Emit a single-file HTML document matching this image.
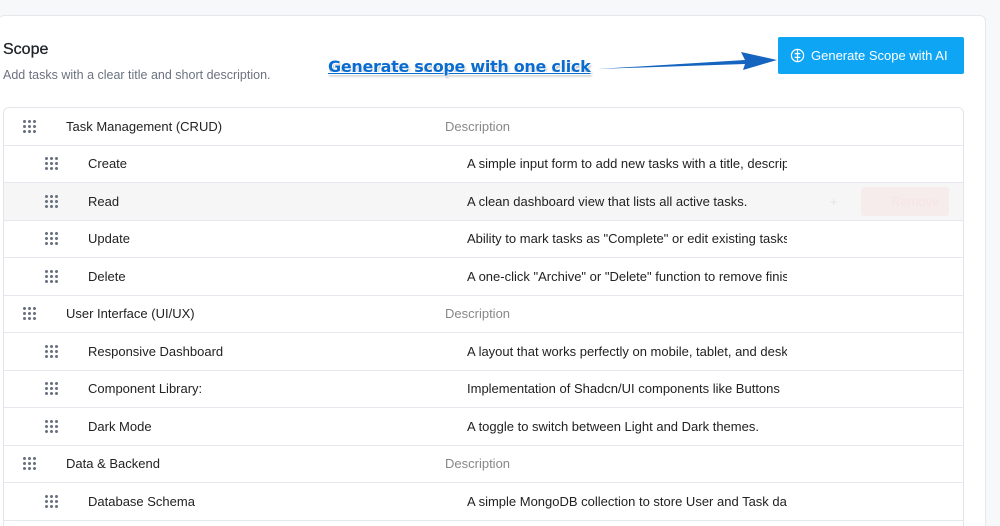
<!DOCTYPE html>
<html style="width:1000px;height:526px;overflow:hidden"><head><style>
*{box-sizing:border-box;margin:0;padding:0}
body{width:1000px;height:526px;overflow:hidden;background:#f7f8fa;font-family:"Liberation Sans",sans-serif;position:relative}
.card{position:absolute;left:-2px;top:15px;width:988px;height:520px;background:#fff;border:1px solid #e6e8ec;border-radius:6px}
.h{position:absolute;left:3px;top:41px;font-size:16px;color:#1f2328;-webkit-text-stroke:0.3px #1f2328}
.sub{position:absolute;left:3px;top:68px;font-size:12.5px;color:#6b7280}
.ann{position:absolute;left:328px;top:57px;font-family:"DejaVu Sans",sans-serif;font-weight:bold;font-size:16px;color:#0a6ccf;text-decoration:underline;text-decoration-thickness:1px;text-shadow:1px 1px 0 #fff,-1px -1px 0 #fff,1px 2px 2px #999;letter-spacing:-0.3px}
.btn{position:absolute;left:778px;top:37px;width:186px;height:37px;background:#0ea5f5;border-radius:2px;color:#fff;font-size:13px;line-height:37px;padding-left:33px}
.tbl{position:absolute;left:3px;top:107px;width:961px;height:430px;border:1px solid #e3e5ea;border-radius:6px;overflow:hidden;background:#fff}
.r{position:absolute;left:0;width:961px;height:38px;border-bottom:1px solid #e6e8ee;font-size:13px;color:#222}
.r span{position:absolute;top:11px}
.g{position:absolute;top:11px;width:15px;height:15px;background-image:radial-gradient(circle,#6b7280 1.4px,transparent 1.6px);background-size:5px 5px}
.d{color:#222;white-space:nowrap;overflow:hidden;width:320px}
.ph{color:#888}
</style></head><body>
<div class="card"></div>
<div class="h">Scope</div>
<div class="sub">Add tasks with a clear title and short description.</div>
<div class="ann">Generate scope with one click</div>
<svg style="position:absolute;left:595px;top:48px" width="185" height="30"><path d="M2 21 L150 12 L146 4 L182 12 L148 22 L150 16 Z" fill="#1565c0"/></svg>
<div class="btn"><svg style="position:absolute;left:12px;top:11px" width="15" height="15" viewBox="0 0 16 16" fill="none" stroke="#fff" stroke-width="1.3"><circle cx="8" cy="8" r="6.5"/><path d="M8 2v12M5 6h6M5 10h6"/></svg>Generate Scope with AI</div>
<div class="tbl">
<div class="r" style="top:0"><div class="g" style="left:18px"></div><span style="left:62px">Task Management (CRUD)</span><span class="ph" style="left:441px">Description</span></div>
<div class="r" style="top:37px"><div class="g" style="left:40px"></div><span style="left:84px">Create</span><span class="d" style="left:463px">A simple input form to add new tasks with a title, description</span></div>
<div class="r" style="top:75px;background:#f6f6f7"><div class="g" style="left:40px"></div><span style="left:84px">Read</span><span class="d" style="left:463px">A clean dashboard view that lists all active tasks.</span><span style="left:826px;color:#e4e4e4">+</span><div style="position:absolute;left:857px;top:4px;width:88px;height:29px;background:#f7ecec;border-radius:3px;color:#f7e4e4;font-size:13px;line-height:29px;padding-left:30px">Remove</div></div>
<div class="r" style="top:112px"><div class="g" style="left:40px"></div><span style="left:84px">Update</span><span class="d" style="left:463px">Ability to mark tasks as "Complete" or edit existing tasks</span></div>
<div class="r" style="top:150px"><div class="g" style="left:40px"></div><span style="left:84px">Delete</span><span class="d" style="left:463px">A one-click "Archive" or "Delete" function to remove finished</span></div>
<div class="r" style="top:187px"><div class="g" style="left:18px"></div><span style="left:62px">User Interface (UI/UX)</span><span class="ph" style="left:441px">Description</span></div>
<div class="r" style="top:225px"><div class="g" style="left:40px"></div><span style="left:84px">Responsive Dashboard</span><span class="d" style="left:463px">A layout that works perfectly on mobile, tablet, and desktop</span></div>
<div class="r" style="top:262px"><div class="g" style="left:40px"></div><span style="left:84px">Component Library:</span><span class="d" style="left:463px">Implementation of Shadcn/UI components like Buttons</span></div>
<div class="r" style="top:300px"><div class="g" style="left:40px"></div><span style="left:84px">Dark Mode</span><span class="d" style="left:463px">A toggle to switch between Light and Dark themes.</span></div>
<div class="r" style="top:337px"><div class="g" style="left:18px"></div><span style="left:62px">Data &amp; Backend</span><span class="ph" style="left:441px">Description</span></div>
<div class="r" style="top:375px"><div class="g" style="left:40px"></div><span style="left:84px">Database Schema</span><span class="d" style="left:463px">A simple MongoDB collection to store User and Task data</span></div>
</div>
</body></html>
